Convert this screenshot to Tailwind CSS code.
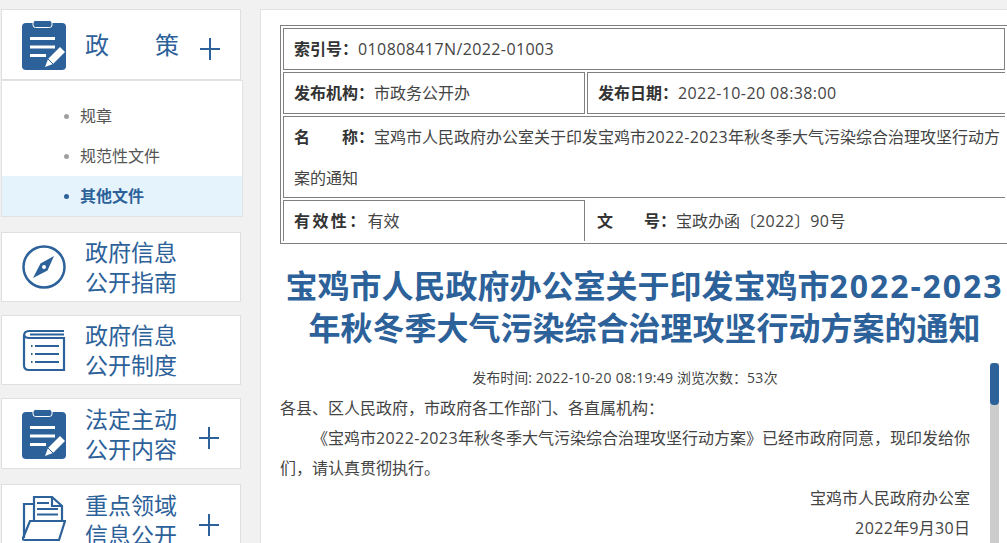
<!DOCTYPE html>
<html lang="zh-CN"><head><meta charset="utf-8">
<script src="https://cdn.jsdelivr.net/npm/@tailwindcss/browser@4"></script>
</head>
<body class="w-[1007px] h-[543px] overflow-hidden bg-[#f1f1f1] font-['Open_Sans','Noto_Sans_CJK_SC',sans-serif] text-[#333]">
<div class="relative flex h-[543px] w-[1007px] overflow-hidden pt-[9px]">
  <aside class="ml-[1px] w-[242px] shrink-0 flex flex-col">
    <div class="w-[240px] h-[71px] bg-white border border-[#dfdfdf] flex items-center shrink-0">
      <svg class="ml-[20px] w-[44px] h-[50px] overflow-visible" viewBox="0 0 44 50"><use href="#clip"/></svg>
      <span class="ml-[19px] text-[24px] leading-none text-[#2c6199] w-[94px] flex justify-between"><span>政</span><span>策</span></span>
      <svg class="ml-[21px] mt-[9px] w-[20px] h-[22px]" viewBox="0 0 20 22"><use href="#plus"/></svg>
    </div>
    <div class="w-[242px] h-[137px] bg-white border border-[#e2e2e2] shrink-0 pt-[15px] text-[16px] text-[#555]">
      <div class="h-[40px] flex items-center pl-[62px]"><span class="w-[5px] h-[5px] rounded-full bg-[#a0a0a0] mr-[11px]"></span>规章</div>
      <div class="h-[40px] flex items-center pl-[62px]"><span class="w-[5px] h-[5px] rounded-full bg-[#a0a0a0] mr-[11px]"></span>规范性文件</div>
      <div class="h-[40px] flex items-center pl-[62px] bg-[#e5f3fd] text-[#2c6199] font-bold"><span class="w-[5px] h-[5px] rounded-full bg-[#2c6199] mr-[11px]"></span>其他文件</div>
    </div>
    <div class="mt-[15px] w-[240px] h-[70px] bg-white border border-[#dfdfdf] flex items-center shrink-0">
      <svg class="ml-[20px] w-[44px] h-[44px]" viewBox="0 0 44 44"><circle cx="22" cy="22" r="20.5" fill="none" stroke="#2c6199" stroke-width="2.5"/><path d="M32 11 L25.5 25.500 L11 33 L18.5 18.5 Z" fill="#2c6199"/><circle cx="22" cy="22" r="2" fill="#fff"/></svg>
      <span class="ml-[19px] text-[23px] leading-[30px] text-[#2c6199]">政府信息<br>公开指南</span>
    </div>
    <div class="mt-[13px] w-[240px] h-[70px] bg-white border border-[#dfdfdf] flex items-center shrink-0">
      <svg class="ml-[20px] w-[44px] h-[44px]" viewBox="0 0 44 44" fill="none" stroke="#2c6199" stroke-width="2.2"><path d="M42 3H7Q2 3 2 8V37Q2 42 7 42H42V10H7Q3 10 2 7"/><path d="M8 6.5H42" /><path d="M13 18H37M13 26H37M13 34H37"/><path d="M9 18h1.500M9 26h1.500M9 34h1.500"/></svg>
      <span class="ml-[19px] text-[23px] leading-[30px] text-[#2c6199]">政府信息<br>公开制度</span>
    </div>
    <div class="mt-[13px] w-[240px] h-[71px] bg-white border border-[#dfdfdf] flex items-center shrink-0">
      <svg class="ml-[20px] w-[44px] h-[50px] overflow-visible" viewBox="0 0 44 50"><use href="#clip"/></svg>
      <span class="ml-[19px] text-[23px] leading-[30px] text-[#2c6199]">法定主动<br>公开内容</span>
      <svg class="ml-[22px] mt-[9px] w-[20px] h-[22px]" viewBox="0 0 20 22"><use href="#plus"/></svg>
    </div>
    <div class="mt-[15px] w-[240px] h-[71px] bg-white border border-[#dfdfdf] flex items-center shrink-0">
      <svg class="ml-[20px] w-[44px] h-[48px]" viewBox="0 0 44 48" fill="none" stroke="#2c6199" stroke-width="2.2"><path d="M12 24V1H30L40 10V24"/><path d="M30 1V10H40"/><path d="M15 7H27M15 13H36M15 18.500H36"/><path d="M12 8H2V42"/><path d="M8 25H43L37 44H3Q0 44 1 42Z"/></svg>
      <span class="ml-[19px] text-[23px] leading-[30px] text-[#2c6199]">重点领域<br>信息公开</span>
      <svg class="ml-[22px] mt-[11px] w-[20px] h-[22px]" viewBox="0 0 20 22"><use href="#plus"/></svg>
    </div>
  </aside>
  <main class="ml-[17px] w-[800px] shrink-0 bg-white border-l border-t border-[#e2e2e2] pl-[19px] pt-[15px]">
    <div class="w-[760px] h-[219px] border border-[#808080] p-[2px] flex flex-col gap-[2px] text-[16px] leading-none">
      <div class="w-[722px] h-[42px] shrink-0 border border-[#808080] flex items-center pl-[10px]"><b>索引号：</b><span class="tracking-[.4px] text-[#444]">010808417N/2022-01003</span></div>
      <div class="w-[722px] h-[42px] shrink-0 flex">
        <div class="w-[302px] border border-[#808080] flex items-center pl-[10px]"><b>发布机构：</b><span class="text-[#444]">市政务公开办</span></div>
        <div class="ml-[2px] w-[418px] border-y border-l border-[#808080] flex items-center pl-[10px]"><b>发布日期：</b><span class="tracking-[.4px] text-[#444]">2022-10-20 08:38:00</span></div>
      </div>
      <div class="w-[722px] h-[82px] shrink-0 border-y border-l border-[#808080] pl-[10px] leading-[41px] text-[#444]"><b class="text-[#333]">名<span class="inline-block w-[32px]"></span>称：</b>宝鸡市人民政府办公室关于印发宝鸡市<span class="tracking-[.4px]">2022-2023</span>年秋冬季大气污染综合治理攻坚行动方<br>案的通知</div>
      <div class="w-[722px] h-[41px] shrink-0 flex">
        <div class="w-[302px] border-l border-t border-r border-[#808080] flex items-center pl-[10px]"><b class="tracking-[2.4px]">有效性：</b><span class="text-[#444]">有效</span></div>
        <div class="flex-1 flex items-center pl-[12px] mt-[1px]"><b>文<span class="inline-block w-[31px]"></span>号：</b><span class="text-[#444]">宝政办函〔<span class="tracking-[.4px]">2022</span>〕<span class="tracking-[.4px]">90</span>号</span></div>
      </div>
    </div>
    <h1 class="w-[729px] mt-[21px] text-center text-[32px] leading-[42px] font-bold text-[#2c6199]">宝鸡市人民政府办公室关于印发宝鸡市<span class="tracking-[1.9px]">2022-2023</span><br>年秋冬季大气污染综合治理攻坚行动方案的通知</h1>
    <p class="w-[690px] mt-[19px] text-center text-[14px] leading-[20px] text-[#444]">发布时间: <span class="tracking-[.3px]">2022-10-20 08:19:49</span> 浏览次数：<span class="tracking-[.3px]">53</span>次</p>
    <div class="w-[690px] text-[16px] leading-[30px] text-[#444] mt-[5px]">
      <p>各县、区人民政府，市政府各工作部门、各直属机构：</p>
      <p class="indent-[32px]">《宝鸡市<span class="tracking-[.4px]">2022-2023</span>年秋冬季大气污染综合治理攻坚行动方案》已经市政府同意，现印发给你<br>们，请认真贯彻执行。</p>
      <p class="text-right">宝鸡市人民政府办公室</p>
      <p class="text-right"><span class="tracking-[.4px]">2022</span>年<span class="tracking-[.4px]">9</span>月<span class="tracking-[.4px]">30</span>日</p>
    </div>
  </main>
  <div class="absolute left-[990px] top-[363px] w-[9px] h-[180px] bg-[#ccc]"><div class="w-[9px] h-[42px] rounded-[4px] bg-[#2c6199]"></div></div>
</div>
<svg class="hidden" width="0" height="0"><defs>
<g id="clip"><path d="M4 3H40Q44 3 44 7V46Q44 50 40 50H4Q0 50 0 46V7Q0 3 4 3Z" fill="#2c6199"/><rect x="11" y="0.500" width="19" height="7" rx="2.500" fill="#2c6199" stroke="#fff" stroke-width="1"/><path d="M8 18.500H33M8 27H33M8 35.500H24" stroke="#fff" stroke-width="3"/><path d="M23 47L26 39L38 27L43 32L31 44Z" fill="#fff"/><path d="M26 39L31 44" stroke="#2c6199" stroke-width="1"/></g>
<g id="plus"><path d="M0 11H20M10 0V22" stroke="#2c6199" stroke-width="2"/></g>
</defs></svg>
</body></html>
